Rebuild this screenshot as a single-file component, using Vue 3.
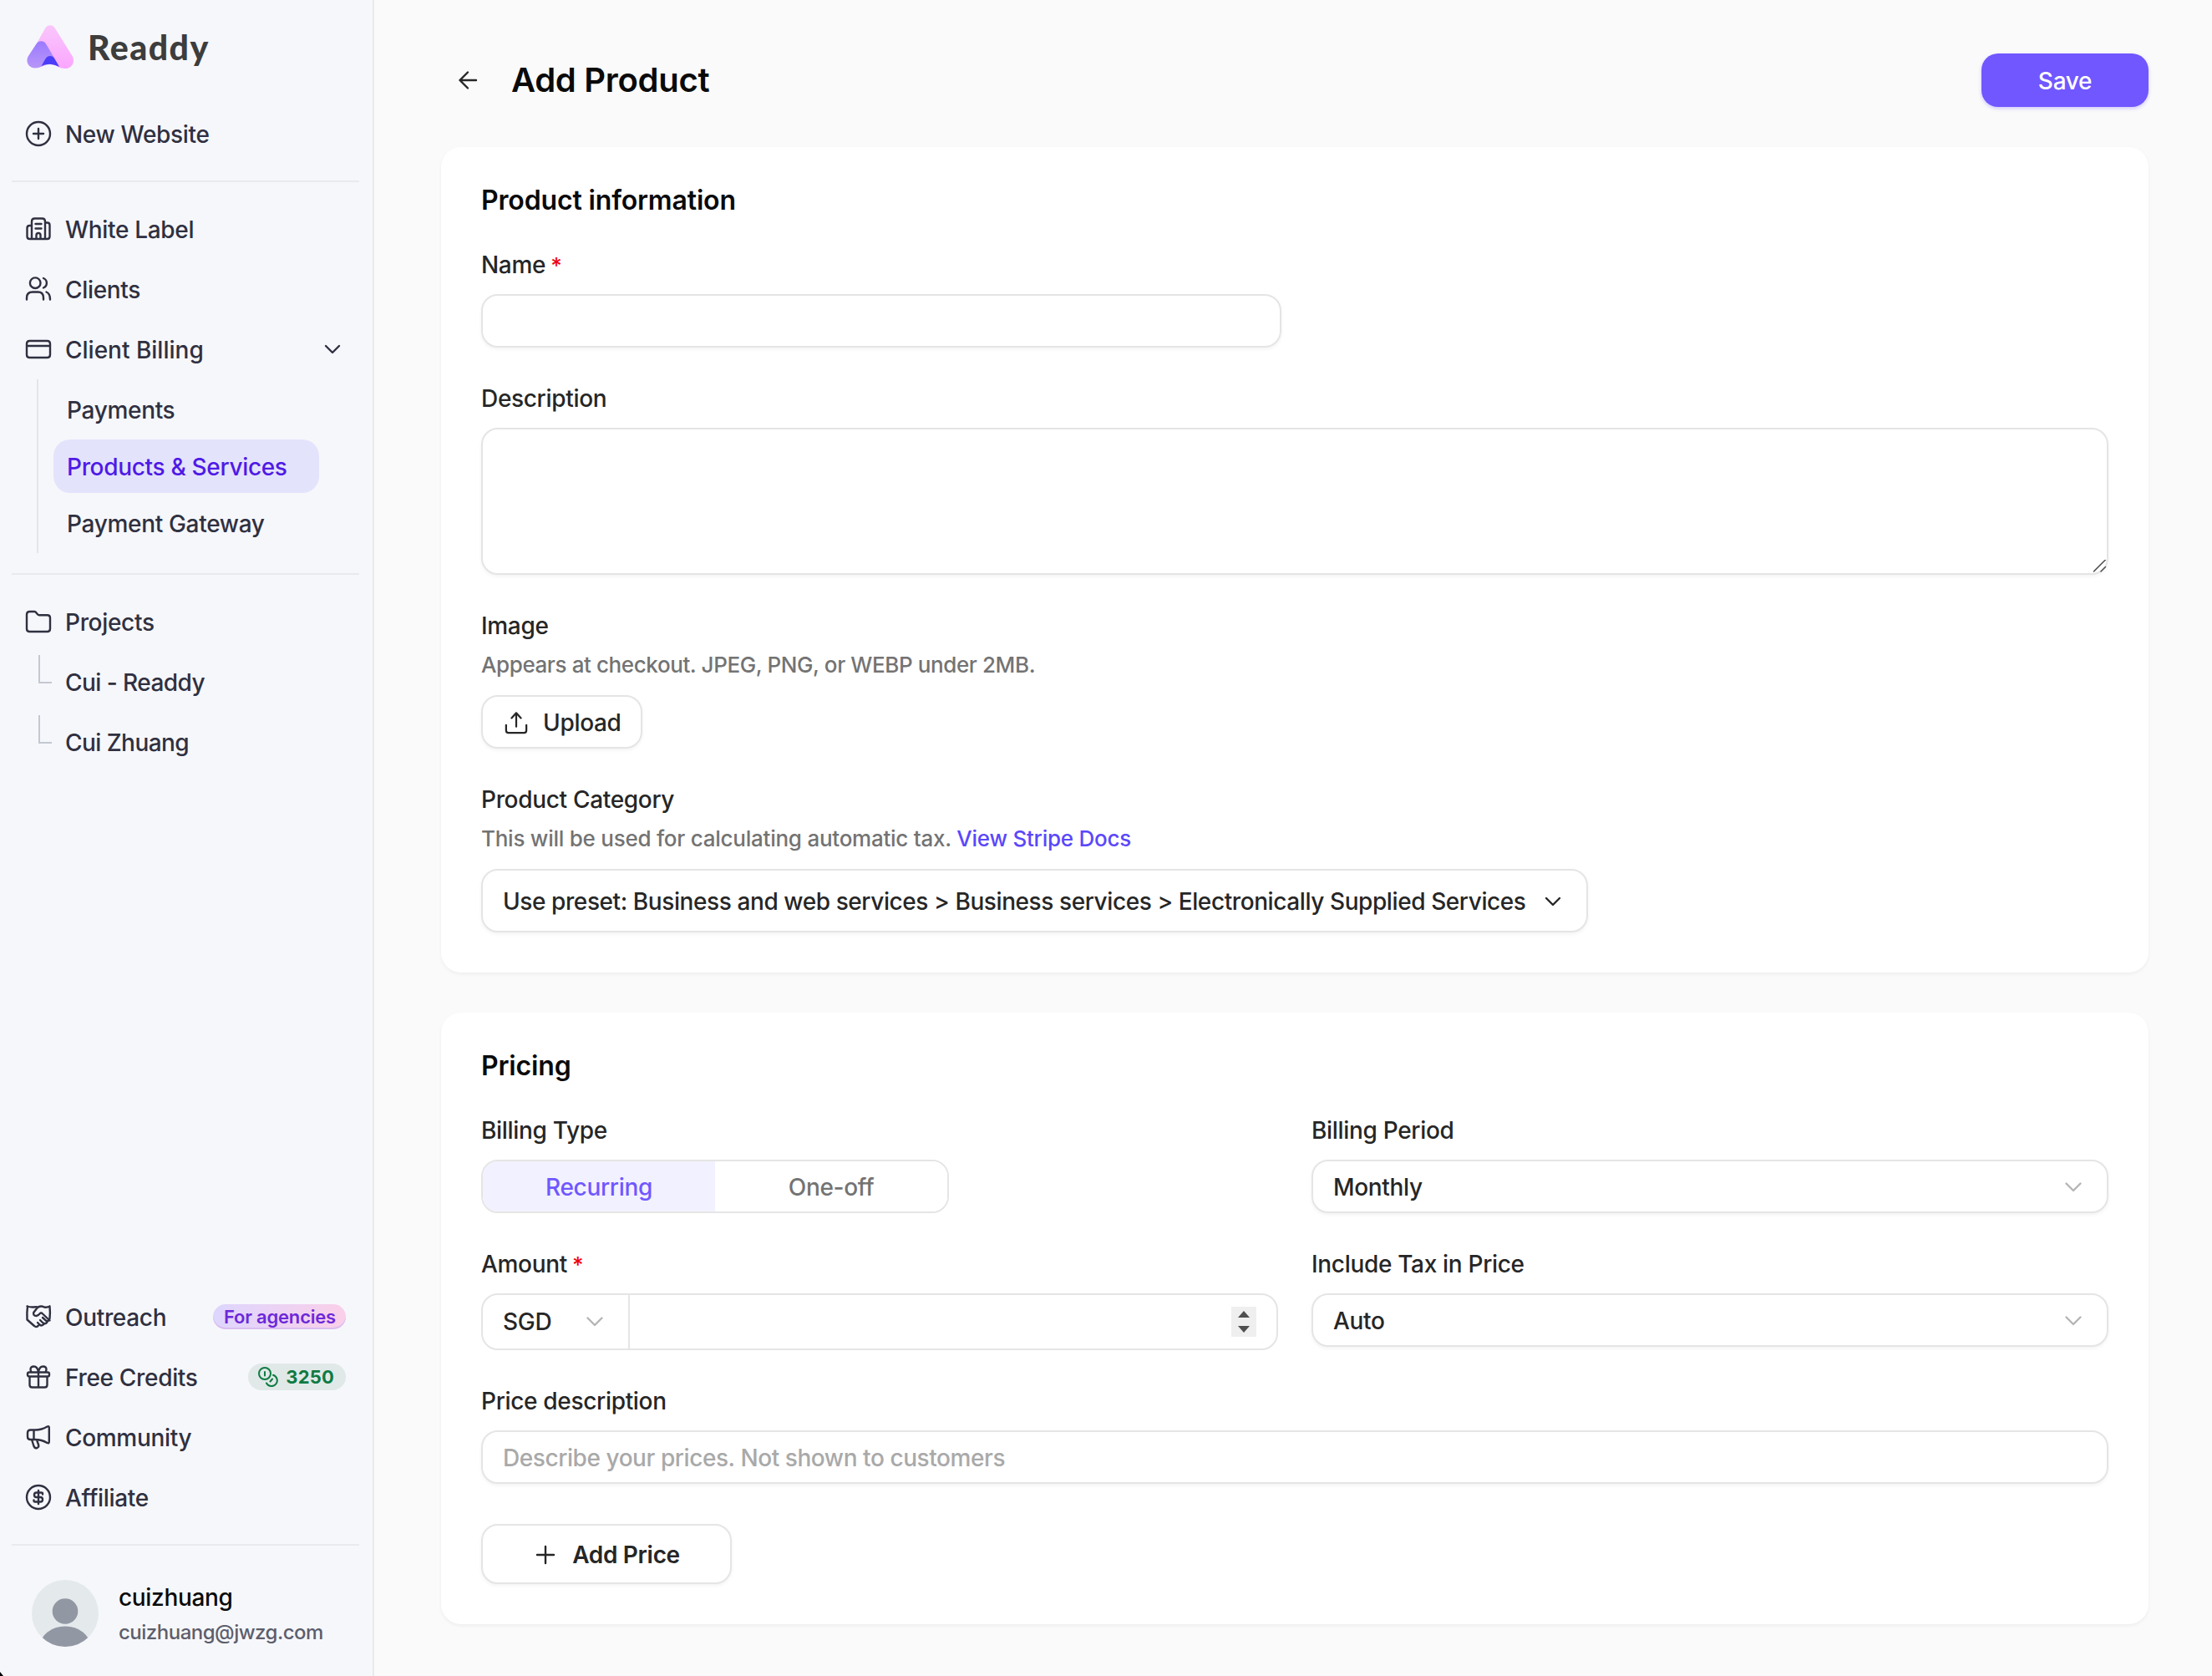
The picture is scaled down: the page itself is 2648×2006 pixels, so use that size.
<template>
  <div class="app">
    <aside class="sidebar">
      <div class="logo">
        <svg class="logo-mark" viewBox="0 0 56 52">
          <defs>
            <linearGradient id="pink" x1="0" y1="0" x2="0" y2="1">
              <stop offset="0" stop-color="#f9c6fb" />
              <stop offset="1" stop-color="#fba6ff" />
            </linearGradient>
            <linearGradient id="violet" x1="0" y1="0" x2="0" y2="1">
              <stop offset="0" stop-color="#9b7bff" />
              <stop offset="1" stop-color="#b896f8" />
            </linearGradient>
          </defs>
          <path d="M22.5 3.2C25 -.8 31 -.8 33.5 3.2L54.5 37C58.5 44 54 52 46 52C38 52 35 47 28 47L13 20Z" fill="url(#pink)" />
          <path d="M11.5 22.5C14 18.2 20.5 18.2 23 22.5L39 49.5C35 48 32 47 28 47C20 47 18 51.5 10 51.5C2 51.5 -2 43.5 2 37Z" fill="url(#violet)" />
          <path d="M17.5 49C21 43 22 41 23.5 39C25.5 36.3 30.5 36.3 32.5 39L39 50C30 46 25 46 17.5 49Z" fill="#4b3df8" />
        </svg>
        <span class="logo-text">Readdy</span>
      </div>

      <a class="nav-item first">
        <svg class="icon" viewBox="0 0 36 36"><path :d="icons.plus" /></svg>
        <span>New Website</span>
      </a>
      <hr />

      <nav class="nav">
        <a v-for="item in mainNav" :key="item.label" class="nav-item" :class="{ open: item.open }">
          <svg class="icon" viewBox="0 0 36 36"><path :d="icons[item.icon]" /></svg>
          <span>{{ item.label }}</span>
          <svg v-if="item.open" class="nav-chevron" viewBox="0 0 24 24"><path d="M4 8l8 8 8-8" /></svg>
        </a>
        <div class="subnav">
          <a v-for="sub in billingNav" :key="sub" :class="{ active: sub === activePage }">{{ sub }}</a>
        </div>
      </nav>
      <hr />

      <nav class="nav">
        <a class="nav-item">
          <svg class="icon" viewBox="0 0 36 36"><path :d="icons.folder" /></svg>
          <span>Projects</span>
        </a>
        <a v-for="project in projects" :key="project" class="nav-item project">
          <i class="branch"></i>
          <span>{{ project }}</span>
        </a>
      </nav>

      <nav class="nav bottom">
        <a v-for="item in bottomNav" :key="item.label" class="nav-item">
          <svg class="icon" viewBox="0 0 36 36"><path :d="icons[item.icon]" /></svg>
          <span>{{ item.label }}</span>
          <b v-if="item.tag" class="tag">{{ item.tag }}</b>
          <b v-if="item.credits" class="credits">
            <svg viewBox="0 0 24 24"><path :d="icons.coins" /></svg>
            {{ item.credits }}
          </b>
        </a>
      </nav>
      <hr />

      <div class="user">
        <svg class="avatar" viewBox="0 0 80 80">
          <clipPath id="round"><circle cx="40" cy="40" r="40" /></clipPath>
          <g clip-path="url(#round)">
            <rect width="80" height="80" fill="#e4e9ec" />
            <circle cx="40" cy="37.5" r="15.3" fill="#9297a4" />
            <ellipse cx="40" cy="79" rx="30" ry="23.5" fill="#9297a4" />
          </g>
        </svg>
        <div>
          <p class="user-name">cuizhuang</p>
          <p class="user-email">cuizhuang@jwzg.com</p>
        </div>
      </div>
      <i class="corner"></i>
    </aside>

    <main class="main">
      <header class="header">
        <svg class="back" viewBox="0 0 24 24"><path d="M22 12H2.5M12 2.5L2.5 12L12 21.5" /></svg>
        <h1>Add Product</h1>
        <button class="save">Save</button>
      </header>

      <section class="card">
        <h2>Product information</h2>

        <div class="field">
          <label>Name <em>*</em></label>
          <input v-model="name" class="control name" type="text" />
        </div>

        <div class="field">
          <label>Description</label>
          <div class="control textarea">
            <svg class="grip" viewBox="0 0 16 16"><path d="M.5 14L14.5 0M9 14L14.5 8.5" /></svg>
          </div>
        </div>

        <div class="field">
          <label>Image</label>
          <p class="help">Appears at checkout. JPEG, PNG, or WEBP under 2MB.</p>
          <button class="control upload">
            <svg viewBox="0 0 30 30"><path d="M15 20V3M9 9L15 2.5L21 9M2 18V25Q2 28 5 28H25Q28 28 28 25V18" /></svg>
            Upload
          </button>
        </div>

        <div class="field">
          <label>Product Category</label>
          <p class="help tax">This will be used for calculating automatic tax. <a>View Stripe Docs</a></p>
          <button class="control preset">
            <span>Use preset: Business and web services &gt; Business services &gt; Electronically Supplied Services</span>
            <svg viewBox="0 0 24 24"><path d="M4 8l8 8 8-8" /></svg>
          </button>
        </div>
      </section>

      <section class="card">
        <h2>Pricing</h2>

        <div class="grid">
          <div class="field">
            <label>Billing Type</label>
            <div class="segmented">
              <button
                v-for="type in billingTypes"
                :key="type"
                :class="{ on: type === billingType }"
                @click="billingType = type"
              >{{ type }}</button>
            </div>
          </div>

          <div class="field">
            <label>Billing Period</label>
            <div class="control select">
              <span>Monthly</span>
              <svg viewBox="0 0 24 24"><path d="M3.5 7.5l8.5 8.5 8.5-8.5" /></svg>
            </div>
          </div>

          <div class="field">
            <label>Amount <em>*</em></label>
            <div class="amount">
              <div class="currency">
                <span>SGD</span>
                <svg viewBox="0 0 24 24"><path d="M3.5 7.5l8.5 8.5 8.5-8.5" /></svg>
              </div>
              <div class="amount-value">
                <svg class="spinner" viewBox="0 0 30 36">
                  <path d="M8 13L15 5L22 13ZM8 23L15 31L22 23Z" />
                </svg>
              </div>
            </div>
          </div>

          <div class="field">
            <label>Include Tax in Price</label>
            <div class="control select">
              <span>Auto</span>
              <svg viewBox="0 0 24 24"><path d="M3.5 7.5l8.5 8.5 8.5-8.5" /></svg>
            </div>
          </div>
        </div>

        <div class="field">
          <label>Price description</label>
          <input v-model="priceNote" class="control" type="text" placeholder="Describe your prices. Not shown to customers" />
        </div>

        <button class="control add-price">
          <svg viewBox="0 0 24 24"><path d="M12 2V22M2 12H22" /></svg>
          Add Price
        </button>
      </section>
    </main>
  </div>
</template>

<script setup>
import { ref } from 'vue';

const name = ref('');
const priceNote = ref('');
const activePage = ref('Products & Services');
const billingTypes = ['Recurring', 'One-off'];
const billingType = ref('Recurring');

const mainNav = [
  { label: 'White Label', icon: 'building' },
  { label: 'Clients', icon: 'users' },
  { label: 'Client Billing', icon: 'card', open: true },
];

const billingNav = ['Payments', 'Products & Services', 'Payment Gateway'];

const projects = ['Cui - Readdy', 'Cui Zhuang'];

const bottomNav = [
  { label: 'Outreach', icon: 'handshake', tag: 'For agencies' },
  { label: 'Free Credits', icon: 'gift', credits: 3250 },
  { label: 'Community', icon: 'megaphone' },
  { label: 'Affiliate', icon: 'dollar' },
];

const icons = {
  plus: 'M32 18A14 14 0 1 1 4 18A14 14 0 1 1 32 18ZM18 12V24M12 18H24',
  building:
    'M10 30V9Q10 5.5 13.5 5.5H22.5Q26 5.5 26 9V30M10 14H7.5Q4.5 14 4.5 17V27Q4.5 30 7.5 30H28.5Q31.5 30 31.5 27V13.5Q31.5 10.5 28.5 10.5H26M14.5 12H21.5M14.5 17.5H21.5M15.5 30V25.5A2.5 2.5 0 0 1 20.5 25.5V30',
  users:
    'M20.5 10.7A6.3 6.3 0 1 1 7.9 10.7A6.3 6.3 0 1 1 20.5 10.7M4 30.5V28.5Q4 21.5 11 21.5H17.5Q24 21.5 24 28.5V30.5M24 5A6.2 6.2 0 0 1 24 16.5M27.5 21.5Q32 23.2 32 30.5',
  card: 'M7.5 8H28.5Q32 8 32 11.5V24.5Q32 28 28.5 28H7.5Q4 28 4 24.5V11.5Q4 8 7.5 8ZM4 14H32',
  folder:
    'M4 26.5V9.5Q4 6 7.5 6H13.5Q14.5 6 15.5 7.5L17 9.3Q17.8 10.3 19 10.3H28.5Q32 10.3 32 13.5V26.5Q32 30 28.5 30H7.5Q4 30 4 26.5Z',
  handshake:
    'M4.5 5.5Q8 6.8 12.5 6.5Q15 6 17 6.5M5 5.5Q4 13 4.5 21.5L13 29Q15.5 31.5 18 28.5M31.5 5.5Q28 7.3 25 6.5Q20 4.2 16.5 7.5L12.2 13Q11.5 17 15.5 17Q18 16.5 20.5 13.5L22 13.5L31.5 22.5M31.5 5.5Q32.3 13 31.5 20Q31 23 28 23.5M17 25L19.5 27.5Q22 29.5 24.5 27M20 22L23.5 25.5Q26 27.5 28.5 24.5M23 19L27.5 23.2',
  gift: 'M7 12.5H29Q31 12.5 31 14.5V15.5Q31 17.5 29 17.5H7Q5 17.5 5 15.5V14.5Q5 12.5 7 12.5ZM7.5 17.5V27.5Q7.5 30.5 10.5 30.5H25.5Q28.5 30.5 28.5 27.5V17.5M18 12.5V30.5M18 12.5Q17 5.5 12.5 5.5Q8.5 5.5 8.5 9Q8.5 11 10 12.5M18 12.5Q19 5.5 23.5 5.5Q27.5 5.5 27.5 9Q27.5 11 26 12.5',
  megaphone:
    'M8.5 9.5H14Q22 9.5 28.5 5.5Q30.8 4.5 30.8 7V23.5Q30.8 26 28.5 25Q22 21 14 21H8.5Q5 21 5 17.5V13Q5 9.5 8.5 9.5ZM12.5 9.5V21M10 21L12.5 29Q13.7 32 16.5 31Q19 30 18 27L16 21.5',
  dollar:
    'M32 18A14 14 0 1 1 4 18A14 14 0 1 1 32 18ZM23 14.5V13.5Q23 12.5 21.5 12.5H15.5Q13 12.5 13 15.2Q13 18 15.5 18H20.5Q23 18 23 20.7Q23 23.5 20.5 23.5H14Q12.5 23.5 12.5 22V21.5M18 10V26',
  coins:
    'M15 8A7 7 0 1 1 1 8A7 7 0 1 1 15 8M18 9.8A6.8 6.8 0 1 1 10 19.5M8 6V10.5M14.5 17.5L17 14.5',
};
</script>

<style>
body {
  background: #fafafa;
}
</style>

<style scoped>
* {
  box-sizing: border-box;
}

.app {
  display: flex;
  width: 2648px;
  height: 2006px;
  font-family: Inter, 'Liberation Sans', sans-serif;
  font-size: 28px;
  font-weight: 450;
  letter-spacing: -0.32px;
  color: #262626;
  background: #fafafa;
}

p,
h1,
h2 {
  margin: 0;
}

button,
input {
  font: inherit;
  letter-spacing: inherit;
  color: inherit;
}

svg {
  flex: none;
  fill: none;
  stroke: currentColor;
  stroke-width: 2.4;
  stroke-linecap: round;
  stroke-linejoin: round;
}

/* Sidebar */
.sidebar {
  position: relative;
  display: flex;
  flex-direction: column;
  width: 448px;
  height: 2006px;
  border-right: 2px solid #e9eaee;
  background: #f6f7fb;
  color: #2f3040;
}

.sidebar hr {
  width: 416px;
  height: 2px;
  margin: 0 0 0 14px;
  border: 0;
  background: #e9eaee;
}

.logo {
  display: flex;
  align-items: center;
  height: 52px;
  margin: 30px 0 42px 32px;
  gap: 17px;
}

.logo-mark {
  width: 56px;
  height: 52px;
  stroke: none;
}

.logo-text {
  font-family: Lato, sans-serif;
  font-size: 41px;
  font-weight: 900;
  letter-spacing: 1.5px;
  color: #3d3d3d;
}

.nav-item {
  display: flex;
  align-items: center;
  height: 72px;
  padding: 0 32px 0 28px;
}

.nav-item span {
  padding-top: 1px;
}

.nav-item.open span {
  letter-spacing: 0;
}

.nav-item.project span {
  letter-spacing: -0.55px;
}

.nav-item.first {
  margin-bottom: 20px;
}

.nav {
  padding-top: 20px;
}

.icon {
  width: 36px;
  height: 36px;
  margin-right: 14px;
}

.nav-chevron {
  width: 24px;
  height: 24px;
  margin: 0 4px 0 auto;
}

.subnav {
  display: flex;
  flex-direction: column;
  gap: 4px;
  width: 338px;
  margin: 0 0 24px 44px;
  padding: 4px 0 4px 18px;
  border-left: 2px solid #e5e5e5;
}

.subnav a {
  height: 64px;
  padding-left: 16px;
  border-radius: 20px;
  line-height: 66px;
}

.subnav a.active {
  background: #e4e3fc;
  color: #4f1ae6;
}

.branch {
  width: 16px;
  height: 34px;
  margin: -30px 16px 0 18px;
  border: solid #c3c8d2;
  border-width: 0 0 2px 2px;
}

.bottom {
  margin-top: auto;
  padding: 0 0 20px;
}

.tag,
.credits {
  display: flex;
  align-items: center;
  margin-left: auto;
  border-radius: 16px;
  font-weight: 600;
}

.tag {
  height: 30px;
  padding: 0 12px 0 13px;
  background: linear-gradient(100deg, #ddd6fe, #fbcfe8);
  box-shadow: inset 0 -2px 0 #d9bdf0;
  font-size: 22px;
  letter-spacing: -0.2px;
  color: #6d28d9;
}

.credits {
  gap: 9px;
  height: 32px;
  padding: 0 14px 0 12px;
  background: #e0e9e7;
  font-size: 22px;
  font-weight: 700;
  letter-spacing: 0.2px;
  color: #0f7a43;
}

.credits svg {
  width: 24px;
  height: 24px;
  stroke-width: 2;
}

.user {
  display: flex;
  gap: 24px;
  height: 156px;
  padding: 41px 0 0 38px;
}

.avatar {
  width: 80px;
  height: 80px;
  stroke: none;
}

.user-name {
  line-height: 42px;
  color: #0a0a0a;
}

.user-email {
  font-size: 24px;
  letter-spacing: -0.5px;
  line-height: 42px;
  color: #5c5e6c;
}

/* Black pixels behind the rounded window corner */
.corner {
  position: absolute;
  left: 0;
  bottom: 0;
  border: solid transparent;
  border-width: 5px 0 0 4px;
  border-left-color: #000;
}

/* Main column */
.main {
  flex: 1;
  padding: 64px 76px 0 80px;
}

.header {
  display: flex;
  align-items: center;
  height: 64px;
  margin-bottom: 48px;
}

.back {
  width: 24px;
  height: 24px;
  margin: 0 40px 0 20px;
}

h1 {
  padding-bottom: 1px;
  font-size: 40px;
  font-weight: 600;
  letter-spacing: -0.3px;
  color: #0a0a0a;
}

.save {
  width: 200px;
  height: 64px;
  margin-left: auto;
  padding: 1px 0 0;
  border: 0;
  border-radius: 20px;
  background: #7057ff;
  box-shadow: 0 2px 4px rgba(112, 87, 255, 0.3);
  color: #fff;
}

.card {
  display: flex;
  flex-direction: column;
  gap: 40px;
  margin-bottom: 48px;
  padding: 48px;
  border-radius: 24px;
  background: #fff;
  box-shadow: 0 2px 4px rgba(0, 0, 0, 0.05);
}

h2 {
  font-size: 32px;
  font-weight: 600;
  letter-spacing: -0.15px;
  line-height: 32px;
  color: #0a0a0a;
}

.field {
  display: flex;
  flex-direction: column;
  align-items: flex-start;
}

label {
  height: 40px;
  margin-bottom: 16px;
  padding-top: 1px;
  line-height: 40px;
}

label em {
  margin-left: -1px;
  font-style: normal;
  font-size: 26px;
  line-height: 1;
  color: #f00012;
}

.help {
  margin: -8px 0 16px;
  font-size: 26px;
  letter-spacing: -0.4px;
  line-height: 40px;
  color: #737373;
}

.help.tax {
  letter-spacing: -0.25px;
}

.help a {
  color: #5b47fb;
}

.control {
  display: flex;
  align-items: center;
  width: 100%;
  height: 64px;
  padding: 1px 24px 0;
  border: 2px solid #e5e5e5;
  border-radius: 20px;
  background: #fff;
  box-shadow: 0 2px 4px rgba(0, 0, 0, 0.05);
}

.control svg,
.currency svg {
  width: 24px;
  height: 24px;
}

.control::placeholder {
  letter-spacing: -0.43px;
  color: #a9a9a9;
}

.name {
  width: 958px;
}

.textarea {
  align-items: flex-end;
  justify-content: flex-end;
  height: 176px;
  padding: 0;
}

.control .grip {
  width: 16px;
  height: 16px;
  color: #555;
  stroke-width: 1.6;
}

.upload {
  gap: 18px;
  width: 193px;
  padding-left: 26px;
}

.control.upload svg {
  width: 28px;
  height: 28px;
}

.preset {
  justify-content: space-between;
  width: 1325px;
  height: 76px;
  padding-right: 28px;
  letter-spacing: -0.41px;
  white-space: nowrap;
}

.grid {
  display: grid;
  grid-template-columns: 1fr 1fr;
  gap: 40px;
}

.segmented {
  display: flex;
  width: 560px;
  height: 64px;
  border: 2px solid #e5e5e5;
  border-radius: 20px;
  overflow: hidden;
}

.segmented button {
  flex: 1;
  padding: 1px 0 0;
  border: 0;
  background: #fff;
  color: #737373;
}

.segmented button.on {
  background: #f2f1ff;
  color: #7057ff;
}

.select,
.currency {
  justify-content: space-between;
}

.select svg,
.currency svg {
  color: #b5b5b5;
}

.select {
  padding-right: 28px;
}

.amount {
  display: flex;
  width: 100%;
  height: 68px;
  border: 2px solid #e5e5e5;
  border-radius: 20px;
}

.currency {
  display: flex;
  align-items: center;
  width: 176px;
  padding: 0 28px 0 24px;
  border-right: 2px solid #e5e5e5;
}

.amount-value {
  display: flex;
  flex: 1;
  align-items: center;
  justify-content: flex-end;
  padding-right: 24px;
}

.spinner {
  width: 30px;
  height: 36px;
  background: #efefef;
  fill: #4f4f4f;
  stroke: none;
}

.add-price {
  justify-content: center;
  gap: 20px;
  width: 300px;
  height: 72px;
  margin-top: 8px;
  padding: 1px 22px 0 25px;
  font-weight: 600;
}
</style>
